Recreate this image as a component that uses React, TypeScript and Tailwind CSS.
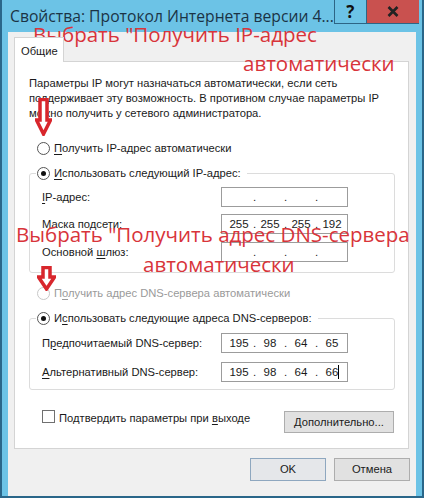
import { Fragment } from "react";

const ui = { fontFamily: '"Liberation Sans", "Noto Sans", sans-serif' };
const red = { fontFamily: '"Open Sans", "Noto Sans", sans-serif' };

const Radio = ({ checked, disabled }: { checked?: boolean; disabled?: boolean }) => (
	<span
		className={`w-[13px] h-[13px] rounded-full border bg-white flex items-center justify-center shrink-0 ${
			disabled ? "border-[#c8c8c8]" : "border-[#555555]"
		}`}>
		{checked && <span className="w-[5px] h-[5px] rounded-full bg-[#111]" />}
	</span>
);

const Acc = ({ children }: { children: string }) => (
	<span className="underline underline-offset-[2px] decoration-1">{children}</span>
);

const IpField = ({ octets, cursor }: { octets?: string[]; cursor?: boolean }) => (
	<div className="w-[127px] h-[20px] border border-[#9c9c9c] bg-white flex items-center pl-[4px] text-[11.5px] text-[#1a1a1a] shrink-0">
		{[0, 1, 2, 3].map((i) => (
			<Fragment key={i}>
				<span className="w-[26px] flex justify-center items-center">
					{octets?.[i] ?? ""}
					{cursor && i === 3 && <span className="w-px h-[14px] bg-black -mr-px" />}
				</span>
				{i < 3 && <span className="w-[5px] text-center">.</span>}
			</Fragment>
		))}
	</div>
);

const FieldRow = ({
	label,
	octets,
	cursor,
	className = "",
}: {
	label: React.ReactNode;
	octets?: string[];
	cursor?: boolean;
	className?: string;
}) => (
	<div className={`flex items-center ${className}`}>
		<span className="w-[179px] whitespace-nowrap">{label}</span>
		<IpField octets={octets} cursor={cursor} />
	</div>
);

const Arrow = ({ w, h, shaft }: { w: number; h: number; shaft: number }) => {
	const cx = w / 2;
	return (
		<svg width={w} height={h} viewBox={`0 0 ${w} ${h}`}>
			<path
				d={`M${cx - 3.5} 1.5 H${cx + 3.5} V${shaft} H${w - 1.5} L${cx} ${h - 2} L1.5 ${shaft} H${cx - 3.5} Z`}
				fill="white"
				stroke="#d8262c"
				strokeWidth={3.5}
				strokeLinejoin="miter"
			/>
		</svg>
	);
};

export default function App() {
	return (
		<div
			className="relative w-[424px] h-[498px] bg-[#6cc3e6] border-l-2 border-r-2 border-b-2 border-[#2a6689] flex flex-col overflow-hidden"
			style={ui}>
			{/* title bar */}
			<div className="h-[32px] flex items-start shrink-0" style={red}>
				<span className="pl-[8px] pt-[6px] text-[15.7px] leading-[20px] text-[#1b3345] whitespace-nowrap">
					Свойства: Протокол Интернета версии 4...
				</span>
				<div className="ml-auto mr-[4px] flex h-[24px] border-l border-b border-[#2d6585]">
					<div className="w-[31px] flex items-center justify-center text-[17px] font-bold text-[#111]">?</div>
					<div className="w-[53px] bg-[#c9514f] border-l border-[#2d6585] flex items-center justify-center">
						<svg width="12" height="11" viewBox="0 0 12 11">
							<path d="M1.5 1 L10.5 10 M10.5 1 L1.5 10" stroke="#222" strokeWidth="2.6" />
						</svg>
					</div>
				</div>
			</div>

			{/* client area */}
			<div className="mx-[6px] flex-1 bg-[#f0f0f0] pl-[6px] pr-[7px] pt-[5px] pb-[7px] flex flex-col text-[11.2px] leading-[15px] text-[#1a1a1a]">
				<div className="relative z-10 w-[50px] h-[25px] -mb-px bg-white border border-b-0 border-[#d4d4d4] pl-[6px] pt-[6px]">
					Общие
				</div>
				<div className="h-[388px] bg-white border border-[#d4d4d4] pl-[14px] pr-[13px] pt-[14px] flex flex-col whitespace-nowrap">
					<p className="leading-[15px]">
						Параметры IP могут назначаться автоматически, если сеть
						<br />
						поддерживает эту возможность. В противном случае параметры IP
						<br />
						можно получить у сетевого администратора.
					</p>

					<div className="mt-[20px] ml-[8px] flex items-center gap-[4px] h-[15px]">
						<Radio />
						<span>
							<Acc>П</Acc>олучить IP-адрес автоматически
						</span>
					</div>

					<div className="mt-[17px] border border-[#dcdcdc] rounded-[3px] pl-[12px] pb-[10px]">
						<div className="-mt-[8px] -ml-[6px] w-fit pr-[6px] pl-[1px] bg-white flex items-center gap-[4px] h-[15px]">
							<Radio checked />
							<span>
								<Acc>И</Acc>спользовать следующий IP-адрес:
							</span>
						</div>
						<FieldRow
							className="mt-[6px]"
							label={
								<>
									<Acc>I</Acc>P-адрес:
								</>
							}
						/>
						<FieldRow className="mt-[7px]" label="Маска подсети:" octets={["255", "255", "255", "192"]} />
						<FieldRow
							className="mt-[8px]"
							label={
								<>
									Основной <Acc>ш</Acc>люз:
								</>
							}
						/>
					</div>

					<div className="mt-[13px] ml-[8px] flex items-center gap-[4px] h-[15px] text-[#9a9a9a]">
						<Radio disabled />
						<span>
							П<Acc>о</Acc>лучить адрес DNS-сервера автоматически
						</span>
					</div>

					<div className="mt-[17px] border border-[#dcdcdc] rounded-[3px] pl-[12px] pb-[7px]">
						<div className="-mt-[8px] -ml-[6px] w-fit pr-[6px] pl-[1px] bg-white flex items-center gap-[4px] h-[15px]">
							<Radio checked />
							<span>
								И<Acc>с</Acc>пользовать следующие адреса DNS-серверов:
							</span>
						</div>
						<FieldRow
							className="mt-[7px]"
							label={
								<>
									П<Acc>р</Acc>едпочитаемый DNS-сервер:
								</>
							}
							octets={["195", "98", "64", "65"]}
						/>
						<FieldRow
							className="mt-[9px]"
							label={
								<>
									<Acc>А</Acc>льтернативный DNS-сервер:
								</>
							}
							octets={["195", "98", "64", "66"]}
							cursor
						/>
					</div>

					<div className="mt-[20px] flex items-start">
						<div className="ml-[13px] flex items-start gap-[4px]">
							<span className="w-[13px] h-[13px] border border-[#707070] bg-white" />
							<span className="mt-px">
								Подтвердить параметры при <Acc>в</Acc>ыходе
							</span>
						</div>
						<button className="ml-auto mr-px mt-px w-[110px] h-[22px] bg-[#e1e1e1] border border-[#adadad] flex items-center justify-center">
							<span>
								<Acc>Д</Acc>ополнительно...
							</span>
						</button>
					</div>
				</div>

				<div className="mt-[9px] flex justify-end gap-[8px] -mr-px">
					<button className="w-[76px] h-[23px] bg-[#e5e7ea] border border-[#8ea7bf] flex items-center justify-center">
						OK
					</button>
					<button className="w-[76px] h-[23px] bg-[#e1e1e1] border border-[#adadad] flex items-center justify-center">
						Отмена
					</button>
				</div>
			</div>

			{/* annotations */}
			<div className="absolute inset-0 pointer-events-none text-[#d8343a]" style={red}>
				<span className="absolute left-[31px] top-[22px] text-[20.5px] leading-[24px] whitespace-nowrap">
					Выбрать "Получить IP-адрес
				</span>
				<span className="absolute left-[241px] top-[51px] text-[20.5px] leading-[24px] whitespace-nowrap">
					автоматически
				</span>
				<span className="absolute left-[14px] top-[222px] text-[20.5px] leading-[24px] whitespace-nowrap">
					Выбрать "Получить адрес DNS-сервера
				</span>
				<span className="absolute left-[141px] top-[252px] text-[20.5px] leading-[24px] whitespace-nowrap">
					автоматически
				</span>
				<div className="absolute left-[33px] top-[98px]">
					<Arrow w={17} h={38} shaft={22} />
				</div>
				<div className="absolute left-[35px] top-[266px]">
					<Arrow w={19} h={25} shaft={11} />
				</div>
			</div>
		</div>
	);
}
